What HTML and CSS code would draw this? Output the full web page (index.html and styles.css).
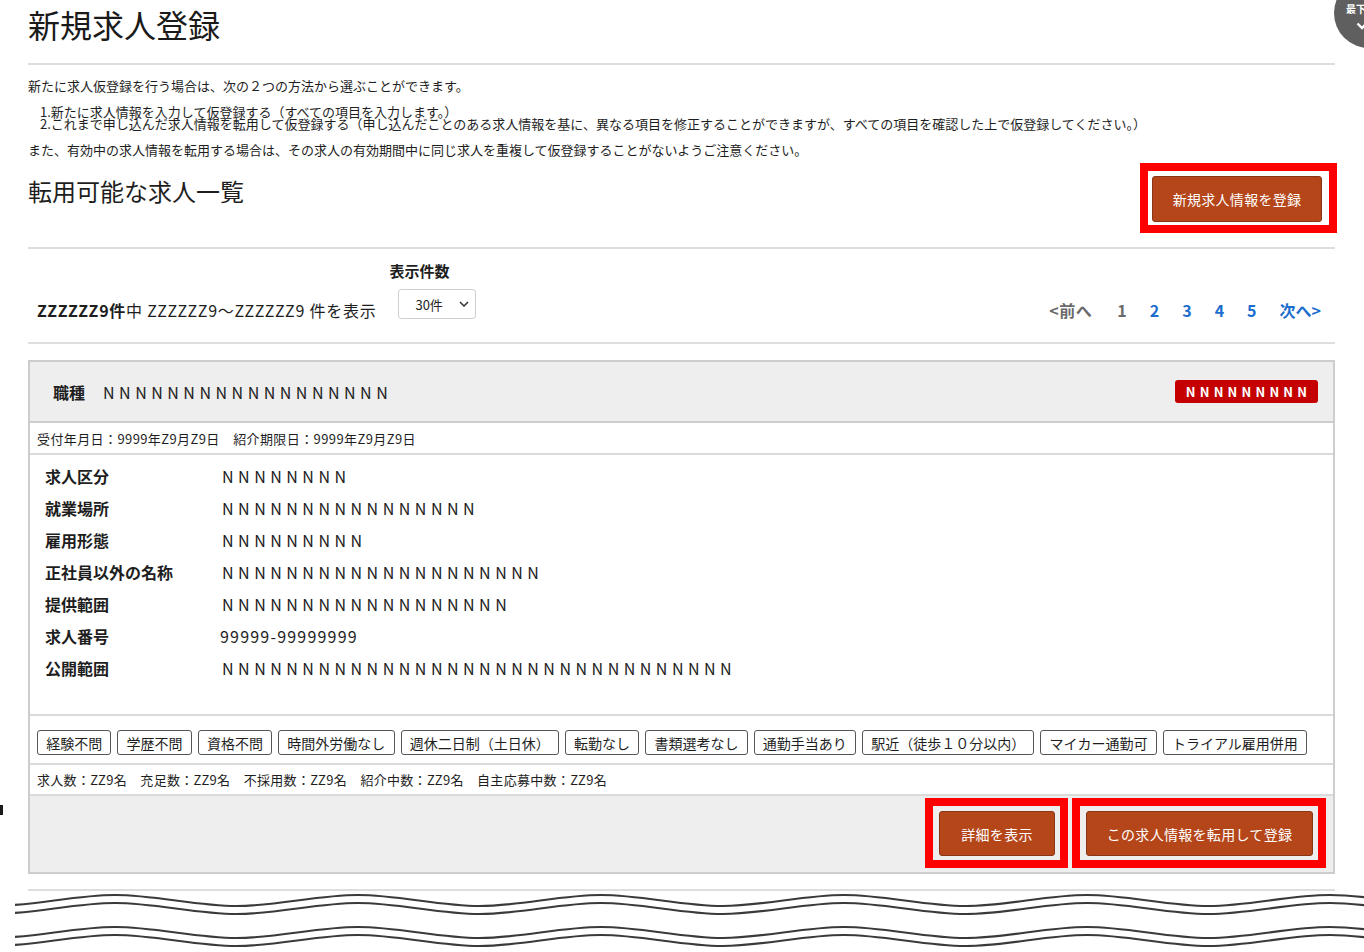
FILE: index.html
```html
<!DOCTYPE html>
<html lang="ja">
<head>
<meta charset="utf-8">
<title>新規求人登録</title>
<link rel="stylesheet" href="styles.css">
</head>
<body>
<div class="page">
  <h1 class="title">新規求人登録</h1>
  <div class="rule rule-top"></div>

  <p class="intro">新たに求人仮登録を行う場合は、次の２つの方法から選ぶことができます。</p>
  <ol class="methods">
    <li>1.新たに求人情報を入力して仮登録する（すべての項目を入力します。）</li>
    <li>2.これまで申し込んだ求人情報を転用して仮登録する（申し込んだことのある求人情報を基に、異なる項目を修正することができますが、すべての項目を確認した上で仮登録してください。）</li>
  </ol>
  <p class="intro intro-last">また、有効中の求人情報を転用する場合は、その求人の有効期間中に同じ求人を重複して仮登録することがないようご注意ください。</p>

  <div class="list-head">
    <h2 class="subtitle">転用可能な求人一覧</h2>
    <span class="hl hl-top"><button class="btn btn-new">新規求人情報を登録</button></span>
  </div>
  <div class="rule rule-mid"></div>

  <div class="paging">
    <div class="count">
      <span class="count-text"><b>ZZZZZZ9件</b>中 ZZZZZZ9～ZZZZZZ9 件を表示</span>
      <div class="per-page">
        <span class="per-label">表示件数</span>
        <span class="select-wrap">
          <select class="select"><option>30件</option></select>
          <svg class="select-arrow" width="10" height="6" viewBox="0 0 10 6"><path d="M1 1l4 4 4-4" fill="none" stroke="#333" stroke-width="1.5"/></svg>
        </span>
      </div>
    </div>
    <nav class="pager">
      <span class="pg pg-off">&lt;前へ</span>
      <span class="pg pg-off">1</span>
      <a class="pg">2</a>
      <a class="pg">3</a>
      <a class="pg">4</a>
      <a class="pg">5</a>
      <a class="pg">次へ&gt;</a>
    </nav>
  </div>
  <div class="rule rule-mid2"></div>

  <section class="card">
    <header class="card-head">
      <div class="job">
        <span class="job-label">職種</span>
        <span class="nn job-value">NNNNNNNNNNNNNNNNNN</span>
      </div>
      <span class="badge">NNNNNNNNN</span>
    </header>
    <div class="dates">受付年月日：9999年Z9月Z9日　紹介期限日：9999年Z9月Z9日</div>
    <dl class="fields">
      <div class="field"><dt>求人区分</dt><dd class="nn">NNNNNNNN</dd></div>
      <div class="field"><dt>就業場所</dt><dd class="nn">NNNNNNNNNNNNNNNN</dd></div>
      <div class="field"><dt>雇用形態</dt><dd class="nn">NNNNNNNNN</dd></div>
      <div class="field"><dt>正社員以外の名称</dt><dd class="nn">NNNNNNNNNNNNNNNNNNNN</dd></div>
      <div class="field"><dt>提供範囲</dt><dd class="nn">NNNNNNNNNNNNNNNNNN</dd></div>
      <div class="field"><dt>求人番号</dt><dd class="num">99999-99999999</dd></div>
      <div class="field"><dt>公開範囲</dt><dd class="nn">NNNNNNNNNNNNNNNNNNNNNNNNNNNNNNNN</dd></div>
    </dl>
    <ul class="tags">
      <li class="tag">経験不問</li>
      <li class="tag">学歴不問</li>
      <li class="tag">資格不問</li>
      <li class="tag">時間外労働なし</li>
      <li class="tag">週休二日制（土日休）</li>
      <li class="tag">転勤なし</li>
      <li class="tag">書類選考なし</li>
      <li class="tag">通勤手当あり</li>
      <li class="tag">駅近（徒歩１０分以内）</li>
      <li class="tag">マイカー通勤可</li>
      <li class="tag">トライアル雇用併用</li>
    </ul>
    <div class="stats">求人数：ZZ9名　充足数：ZZ9名　不採用数：ZZ9名　紹介中数：ZZ9名　自主応募中数：ZZ9名</div>
    <footer class="card-foot">
      <span class="hl hl-foot"><button class="btn btn-detail">詳細を表示</button></span>
      <span class="hl hl-foot"><button class="btn btn-reuse">この求人情報を転用して登録</button></span>
    </footer>
  </section>
  <div class="rule rule-bottom"></div>
</div>

<svg class="wave" width="1349" height="58" viewBox="0 0 1349 58" aria-hidden="true">
  <defs>
    <path id="wl" d="M-21.5,15 C19,15 59.5,4 100,4 S181,15 221.5,15 S302.5,4 343,4 S424,15 464.5,15 S545.5,4 586,4 S667,15 707.5,15 S788.5,4 829,4 S910,15 950.5,15 S1031.5,4 1072,4 S1153,15 1193.5,15 S1274.5,4 1315,4 S1396,15 1436.5,15" fill="none" stroke="#3a3a3a" stroke-width="2.2"/>
  </defs>
  <use href="#wl"/>
  <use href="#wl" transform="translate(0,8)"/>
  <use href="#wl" transform="translate(0,32)"/>
  <use href="#wl" transform="translate(0,40)"/>
</svg>

<a class="to-bottom" href="#">
  <span class="to-bottom-text">最下</span>
  <svg class="to-bottom-arrow" width="12" height="8" viewBox="0 0 12 8"><path d="M1.5 1.5l4.5 4.5 4.5-4.5" fill="none" stroke="#fff" stroke-width="2.4"/></svg>
</a>
<span class="edge-mark"></span>
</body>
</html>
```

FILE: styles.css
```css
* { box-sizing: border-box; }

html, body {
  margin: 0;
  padding: 0;
  background: #fff;
  overflow: hidden;
}

body {
  position: relative;
  width: 1364px;
  height: 952px;
  font-family: "Noto Sans CJK JP", "Noto Sans", sans-serif;
  color: #1e1e1e;
}

.page {
  padding: 0 29px 0 28px;
}

.title {
  margin: 0;
  font-size: 32px;
  font-weight: 400;
  line-height: 48px;
  color: #1a1a1a;
}

.rule {
  height: 2px;
  background: #dedede;
}
.rule-top { margin-top: 15px; }
.rule-mid { margin-top: 14px; }
.rule-mid2 { margin-top: 23px; }
.rule-bottom { margin-top: 15px; }

.intro {
  margin: 11px 0 0;
  font-size: 13px;
  line-height: 20px;
}
.intro-last { margin-top: 10px; }

.methods {
  list-style: none;
  margin: 10px 0 0;
  padding: 0 0 0 12px;
  font-size: 13px;
  line-height: 12px;
}

.list-head {
  display: flex;
  justify-content: space-between;
  align-items: flex-start;
  margin-top: 3px;
  margin-right: -2px;
}

.subtitle {
  margin: 12px 0 0;
  font-size: 24px;
  font-weight: 400;
  line-height: 32px;
}

.hl {
  display: inline-flex;
  border: 8px solid #ff0000;
}
.hl-top { padding: 5px 7px 3px 4px; }
.hl-foot { padding: 5px 5px 4px 6px; }

.btn {
  height: 46px;
  padding: 0;
  display: flex;
  align-items: center;
  justify-content: center;
  white-space: nowrap;
  font-family: inherit;
  font-size: 14px;
  letter-spacing: 0.3px;
  color: #fff;
  background: #b5461a;
  border: 1px solid #8a3514;
  border-radius: 3px;
  cursor: pointer;
}
.btn-new { width: 170px; }
.btn-detail { width: 116px; height: 45px; }
.btn-reuse { width: 227px; height: 45px; }

.paging {
  display: flex;
  justify-content: space-between;
  align-items: flex-end;
  padding: 12px 14px 0 9px;
}

.count {
  display: flex;
  align-items: flex-end;
  gap: 22px;
}

.count-text {
  font-size: 16px;
  letter-spacing: 0.75px;
  line-height: 20px;
  margin-bottom: -1px;
}
.count-text b { font-weight: 700; }

.per-page {
  display: flex;
  flex-direction: column;
  align-items: flex-start;
  gap: 8px;
}

.per-label {
  margin-left: -9px;
  font-size: 15px;
  font-weight: 700;
  line-height: 20px;
}

.select-wrap {
  position: relative;
  display: inline-block;
}

.select {
  appearance: none;
  -webkit-appearance: none;
  width: 78px;
  height: 30px;
  padding: 0 0 0 16px;
  font-family: inherit;
  font-size: 13px;
  color: #222;
  background: #fff;
  border: 1px solid #cfcfcf;
  border-radius: 3px;
}

.select-arrow {
  position: absolute;
  right: 7px;
  top: 12px;
  pointer-events: none;
}

.pager {
  display: flex;
  gap: 23px;
  margin-bottom: -1px;
  font-size: 16px;
  font-weight: 700;
  line-height: 20px;
}

.pg { color: #1c6dce; text-decoration: none; }
.pg-off { color: #6a6a6a; }
.pg-off:first-child { margin-right: 2px; letter-spacing: 0.5px; }

.card {
  margin-top: 16px;
  border: 2px solid #cdcdcd;
}

.card-head {
  display: flex;
  justify-content: space-between;
  align-items: center;
  height: 61px;
  padding: 0 15px 0 23px;
  background: #eeeeee;
  border-bottom: 2px solid #cdcdcd;
}

.job {
  display: flex;
  align-items: center;
  gap: 18px;
}

.job-label {
  font-size: 16px;
  font-weight: 700;
}

.nn {
  font-size: 16px;
  letter-spacing: 4.5px;
}

.badge {
  width: 143px;
  height: 23px;
  display: flex;
  align-items: center;
  justify-content: center;
  padding-left: 4px;
  font-size: 13px;
  font-weight: 700;
  letter-spacing: 4.2px;
  color: #fff;
  background: #c40000;
  border-radius: 3px;
}

.dates {
  height: 32px;
  padding: 0 7px;
  display: flex;
  align-items: center;
  font-size: 13px;
  letter-spacing: 0.4px;
  border-bottom: 2px solid #dadada;
}

.fields {
  margin: 0;
  padding: 5px 15px 30px;
  border-bottom: 2px solid #dadada;
}

.field {
  display: flex;
  line-height: 32px;
}

.field dt {
  width: 177px;
  font-size: 16px;
  font-weight: 700;
}

.field dd {
  margin: 0;
}

.field dd.num {
  margin-left: -2px;
  font-size: 16px;
  letter-spacing: 1.2px;
}

.tags {
  display: flex;
  gap: 6px;
  list-style: none;
  margin: 0;
  padding: 14px 7px 8px;
  border-bottom: 2px solid #dadada;
}

.tag {
  height: 25px;
  padding: 0 8.2px;
  display: flex;
  align-items: center;
  font-size: 14px;
  border: 1px solid #555;
  border-radius: 3px;
  white-space: nowrap;
}

.stats {
  height: 31px;
  padding: 0 7px;
  display: flex;
  align-items: center;
  font-size: 13px;
  letter-spacing: 0.3px;
  border-bottom: 2px solid #dadada;
}

.card-foot {
  display: flex;
  justify-content: flex-end;
  gap: 4px;
  padding: 2px 7px 4px;
  background: #eeeeee;
}

.wave {
  display: block;
  margin: 0 0 0 15px;
}

.to-bottom {
  position: absolute;
  left: 1334px;
  top: -22px;
  width: 70px;
  height: 70px;
  border-radius: 50%;
  background: #5f5f5f;
  text-decoration: none;
}

.to-bottom-text {
  position: absolute;
  left: 12px;
  top: 25px;
  font-size: 10px;
  font-weight: 700;
  line-height: 12px;
  color: #fff;
  white-space: nowrap;
}

.to-bottom-arrow {
  position: absolute;
  left: 22px;
  top: 44px;
}

.edge-mark {
  position: absolute;
  left: 0;
  top: 805px;
  width: 3px;
  height: 10px;
  background: #1a1a1a;
}
```
